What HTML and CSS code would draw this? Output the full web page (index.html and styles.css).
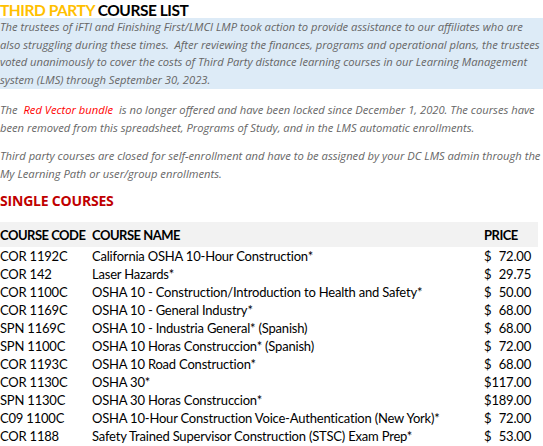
FILE: index.html
```html
<!DOCTYPE html>
<html>
<head>
<meta charset="utf-8">
<link rel="stylesheet" href="styles.css">
</head>
<body>
<h1 class="title"><span class="gold">THIRD PARTY</span> COURSE LIST</h1>
<p class="note boxed">The trustees of iFTI and Finishing First/LMCI LMP took action to provide assistance to our affiliates who are<br>also struggling during these times.&nbsp; After reviewing the finances, programs and operational plans, the trustees<br>voted unanimously to cover the costs of Third Party distance learning courses in our Learning Management<br>system (LMS) through September 30, 2023.</p>
<p class="note p2">The &nbsp;<span class="red">Red Vector bundle</span>&nbsp; is no longer offered and have been locked since December 1, 2020. The courses have<br>been removed from this spreadsheet, Programs of Study, and in the LMS automatic enrollments.</p>
<p class="note p3">Third party courses are closed for self-enrollment and have to be assigned by your DC LMS admin through the<br>My Learning Path or user/group enrollments.</p>
<h2 class="section">SINGLE COURSES</h2>
<table class="courses">
<colgroup><col class="c-code"><col class="c-name"><col class="c-price"></colgroup>
<thead>
<tr><th>COURSE CODE</th><th>COURSE NAME</th><th>PRICE</th></tr>
</thead>
<tbody>
<tr><td>COR 1192C</td><td>California OSHA 10-Hour Construction*</td><td><div class="money"><span>$</span><span>72.00</span></div></td></tr>
<tr><td>COR 142</td><td>Laser Hazards*</td><td><div class="money"><span>$</span><span>29.75</span></div></td></tr>
<tr><td>COR 1100C</td><td>OSHA 10 - Construction/Introduction to Health and Safety*</td><td><div class="money"><span>$</span><span>50.00</span></div></td></tr>
<tr><td>COR 1169C</td><td>OSHA 10 - General Industry*</td><td><div class="money"><span>$</span><span>68.00</span></div></td></tr>
<tr><td>SPN 1169C</td><td>OSHA 10 - Industria General* (Spanish)</td><td><div class="money"><span>$</span><span>68.00</span></div></td></tr>
<tr><td>SPN 1100C</td><td>OSHA 10 Horas Construccion* (Spanish)</td><td><div class="money"><span>$</span><span>72.00</span></div></td></tr>
<tr><td>COR 1193C</td><td>OSHA 10 Road Construction*</td><td><div class="money"><span>$</span><span>68.00</span></div></td></tr>
<tr><td>COR 1130C</td><td>OSHA 30*</td><td><div class="money"><span>$</span><span>117.00</span></div></td></tr>
<tr><td>SPN 1130C</td><td>OSHA 30 Horas Construccion*</td><td><div class="money"><span>$</span><span>189.00</span></div></td></tr>
<tr><td>C09 1100C</td><td>OSHA 10-Hour Construction Voice-Authentication (New York)*</td><td><div class="money"><span>$</span><span>72.00</span></div></td></tr>
<tr><td>COR 1188</td><td>Safety Trained Supervisor Construction (STSC) Exam Prep*</td><td><div class="money"><span>$</span><span>53.00</span></div></td></tr>
</tbody>
</table>
</body>
</html>
```

FILE: styles.css
```css
html, body {
  margin: 0;
  padding: 0;
  background: #ffffff;
}
body {
  width: 543px;
  overflow: hidden;
  font-family: "Open Sans", "DejaVu Sans", sans-serif;
}
.title {
  margin: 0;
  height: 18px;
  font-family: "Lato", "Open Sans", sans-serif;
  font-size: 15.5px;
  line-height: 18px;
  padding-top: 1px;
  box-sizing: border-box;
  font-weight: 700;
  letter-spacing: -0.45px;
  color: #000;
  white-space: nowrap;
}
.gold {
  color: #ffc000;
}
.note {
  margin: 0;
  font-style: italic;
  font-size: 11.2px;
  line-height: 17.5px;
  color: #666666;
  white-space: nowrap;
}
.boxed {
  background: #ddebf7;
  padding: 0 0 1px 0;
}
.p2 {
  margin-top: 12px;
}
.p3 {
  margin-top: 11px;
}
.red {
  color: #ff0000;
}
.section {
  margin: 10px 0 0 0;
  font-size: 14px;
  line-height: 18px;
  font-weight: 700;
  letter-spacing: -0.2px;
  color: #c00000;
}
.courses {
  margin-top: 12px;
  width: 538px;
  table-layout: fixed;
  border-collapse: collapse;
  font-family: "Lato", "Open Sans", sans-serif;
  font-size: 13px;
  letter-spacing: -0.2px;
  color: #000;
}
.c-code {
  width: 92px;
}
.c-name {
  width: 392px;
}
.c-price {
  width: 54px;
}
.courses th {
  background: #f2f2f2;
  height: 25px;
  padding: 0;
  text-align: left;
  font-weight: 700;
  letter-spacing: -0.5px;
  white-space: nowrap;
  overflow: hidden;
}
.courses td {
  height: 18px;
  padding: 0;
  line-height: 18px;
  white-space: nowrap;
}
.money {
  display: flex;
  justify-content: space-between;
  width: 47px;
}
```
